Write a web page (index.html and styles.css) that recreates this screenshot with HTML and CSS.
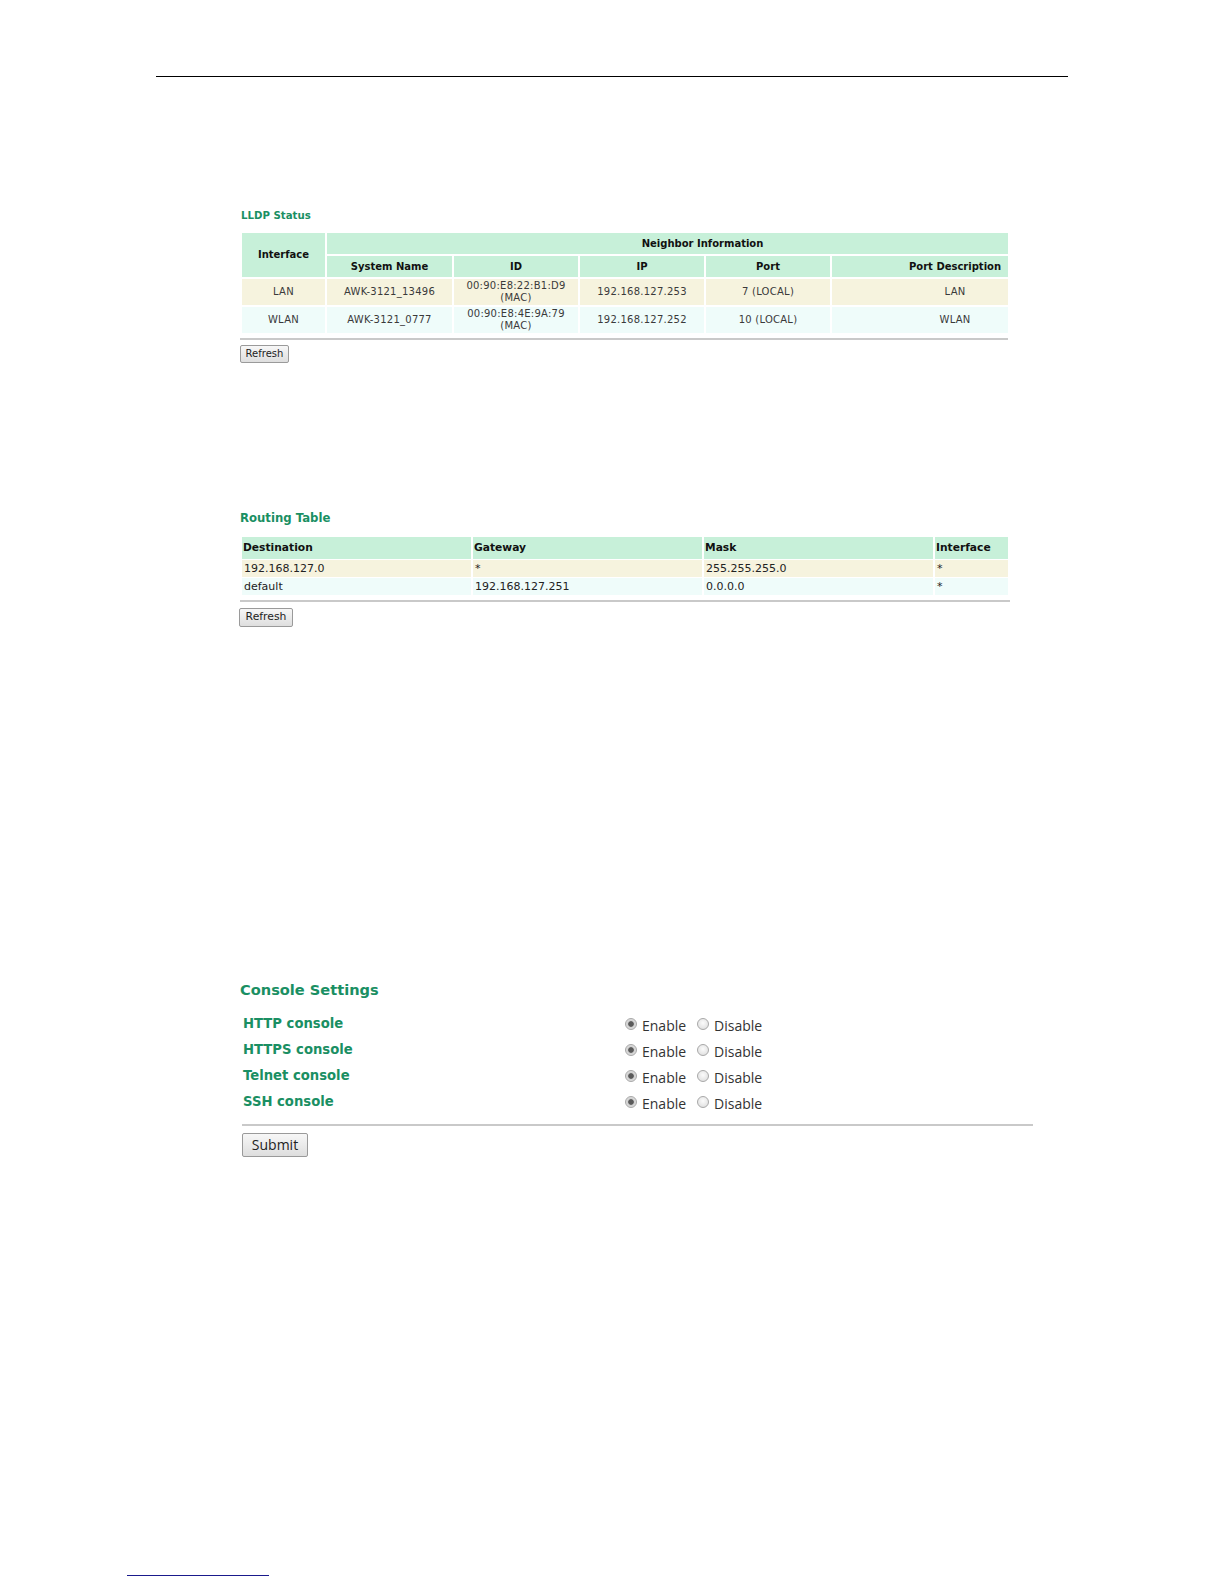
FILE: index.html
```html
<!DOCTYPE html>
<html>
<head>
<meta charset="utf-8">
<title>LLDP / Routing / Console</title>
<link rel="stylesheet" href="styles.css">
</head>
<body>
<div class="page">
  <div class="top-rule"></div>

  <section class="sec lldp">
    <h2 class="title-sm">LLDP Status</h2>
    <table class="grid lldp-table">
      <colgroup>
        <col class="c-if"><col class="c-sn"><col class="c-id"><col class="c-ip"><col class="c-port"><col class="c-desc">
      </colgroup>
      <thead>
        <tr class="hrow">
          <th rowspan="2">Interface</th>
          <th colspan="5" class="pad-desc">Neighbor Information</th>
        </tr>
        <tr class="hrow">
          <th>System Name</th><th>ID</th><th>IP</th><th>Port</th><th class="pad-desc">Port Description</th>
        </tr>
      </thead>
      <tbody>
        <tr class="drow odd">
          <td>LAN</td><td>AWK-3121_13496</td><td class="two">00:90:E8:22:B1:D9<br>(MAC)</td><td>192.168.127.253</td><td>7 (LOCAL)</td><td class="pad-desc">LAN</td>
        </tr>
        <tr class="drow even">
          <td>WLAN</td><td>AWK-3121_0777</td><td class="two">00:90:E8:4E:9A:79<br>(MAC)</td><td>192.168.127.252</td><td>10 (LOCAL)</td><td class="pad-desc">WLAN</td>
        </tr>
      </tbody>
    </table>
    <div class="divider lldp-div"></div>
    <button class="btn btn-lldp" type="button">Refresh</button>
  </section>

  <section class="sec routing">
    <h2 class="title-md">Routing Table</h2>
    <table class="grid route-table">
      <colgroup>
        <col class="r-wide"><col class="r-wide"><col class="r-wide"><col class="r-if">
      </colgroup>
      <thead>
        <tr class="rh"><th>Destination</th><th>Gateway</th><th>Mask</th><th>Interface</th></tr>
      </thead>
      <tbody>
        <tr class="rd odd"><td>192.168.127.0</td><td>*</td><td>255.255.255.0</td><td>*</td></tr>
        <tr class="rd even"><td>default</td><td>192.168.127.251</td><td>0.0.0.0</td><td>*</td></tr>
      </tbody>
    </table>
    <div class="divider route-div"></div>
    <button class="btn btn-route" type="button">Refresh</button>
  </section>

  <section class="sec console">
    <h2 class="title-lg">Console Settings</h2>
    <div class="con-list">
      <div class="con-row">
        <span class="con-label">HTTP console</span>
        <label class="opt"><input type="radio" name="http" checked><span>Enable</span></label>
        <label class="opt"><input type="radio" name="http"><span>Disable</span></label>
      </div>
      <div class="con-row">
        <span class="con-label">HTTPS console</span>
        <label class="opt"><input type="radio" name="https" checked><span>Enable</span></label>
        <label class="opt"><input type="radio" name="https"><span>Disable</span></label>
      </div>
      <div class="con-row">
        <span class="con-label">Telnet console</span>
        <label class="opt"><input type="radio" name="telnet" checked><span>Enable</span></label>
        <label class="opt"><input type="radio" name="telnet"><span>Disable</span></label>
      </div>
      <div class="con-row">
        <span class="con-label">SSH console</span>
        <label class="opt"><input type="radio" name="ssh" checked><span>Enable</span></label>
        <label class="opt"><input type="radio" name="ssh"><span>Disable</span></label>
      </div>
    </div>
    <div class="divider con-div"></div>
    <button class="btn btn-submit" type="button">Submit</button>
  </section>

  <div class="foot-rule"></div>
</div>
</body>
</html>
```

FILE: styles.css
```css
* { box-sizing: border-box; }

html, body {
  margin: 0;
  padding: 0;
  background: #ffffff;
}

.page {
  width: 1224px;
  min-height: 1584px;
  padding-top: 76px;
  overflow: hidden;
}

.top-rule {
  margin-left: 156px;
  width: 912px;
  height: 1px;
  background: #000000;
}

.sec {
  margin-left: 240px;
  width: 800px;
}

/* headings */
.title-sm,
.title-md,
.title-lg {
  margin: 0;
  font-family: "DejaVu Sans", Verdana, sans-serif;
  font-weight: bold;
  color: #1a8f63;
}

.title-sm {
  margin-left: 1px;
  font-size: 10.2px;
  line-height: 14px;
}

.title-md {
  font-size: 11.7px;
  line-height: 16px;
}

.title-lg {
  font-size: 14.6px;
  line-height: 20px;
}

/* tables */
.grid {
  border-collapse: separate;
  border-spacing: 2px;
  table-layout: fixed;
  width: 770px;
}

.grid th,
.grid td {
  padding: 0;
  vertical-align: middle;
}

.lldp { margin-top: 132px; }

.lldp-table { margin-top: 8px; }

.c-if { width: 83px; }
.c-sn { width: 125px; }
.c-id { width: 124px; }
.c-ip { width: 124px; }
.c-port { width: 124px; }
.c-desc { width: 176px; }

.lldp-table th {
  height: 21px;
  background: #c7f0d9;
  color: #111111;
  font: bold 10px/12px "DejaVu Sans", Verdana, sans-serif;
  text-align: center;
}

.lldp-table td {
  height: 26px;
  color: #3a3a3a;
  font: 10px/12px "DejaVu Sans", Verdana, sans-serif;
  letter-spacing: 0.25px;
  text-align: center;
}

.lldp-table th.pad-desc,
.lldp-table td.pad-desc {
  padding-left: 70px;
}

.odd td { background: #f6f3de; }
.even td { background: #effcfa; }

.divider {
  height: 2px;
  background: #c9c9c9;
}

.lldp-div {
  margin-top: 3px;
  width: 768px;
}

.btn {
  display: block;
  padding: 0;
  border: 1px solid #9a9a9a;
  border-radius: 2px;
  background: linear-gradient(#f7f7f7, #dedede);
  color: #222222;
  cursor: pointer;
}

.btn-lldp {
  margin-top: 5px;
  width: 49px;
  height: 18px;
  font: 10px/1 "DejaVu Sans", Verdana, sans-serif;
}

/* routing */
.routing { margin-top: 147px; }

.route-table {
  margin-top: 10px;
  border-spacing: 2px 1px;
}

.r-wide { width: 229px; }
.r-if { width: 73px; }

.route-table th {
  height: 22px;
  padding-left: 1px;
  background: #c7f0d9;
  color: #111111;
  font: bold 10.7px/12px "DejaVu Sans", Verdana, sans-serif;
  text-align: left;
}

.route-table td {
  height: 17px;
  padding-left: 2px;
  color: #222222;
  font: 11px/13px "DejaVu Sans", Verdana, sans-serif;
  text-align: left;
}

.route-div {
  margin-top: 4px;
  width: 770px;
}

.btn-route {
  margin-top: 6px;
  margin-left: -1px;
  width: 54px;
  height: 19px;
  font: 10.8px/1 "DejaVu Sans", Verdana, sans-serif;
}

/* console */
.console { margin-top: 353px; }

.con-list {
  margin-top: 11px;
}

.con-row {
  display: flex;
  align-items: center;
  height: 26px;
  padding-left: 3px;
}

.con-label {
  width: 382px;
  font: bold 13.2px/16px "DejaVu Sans", Verdana, sans-serif;
  color: #1a8f63;
}

.opt {
  display: flex;
  align-items: center;
  font: 14px/18px "Open Sans", "Segoe UI", sans-serif;
  color: #333333;
}

.opt + .opt { margin-left: 11px; }

.opt input {
  -webkit-appearance: none;
  appearance: none;
  margin: 0 5px 0 0;
  width: 12px;
  height: 12px;
  border: 1px solid #a8a8a8;
  border-radius: 50%;
  background: radial-gradient(circle at 50% 40%, #fbfbfb 0, #e4e4e4 70%, #d6d6d6 100%);
}

.opt input:checked {
  background: radial-gradient(circle, #5a5a5a 0, #5a5a5a 2.4px, #cfcfcf 3.2px, #ececec 100%);
}

.opt span { position: relative; top: 2px; }

.con-div {
  margin-top: 9px;
  margin-left: 2px;
  width: 791px;
}

.btn-submit {
  margin-top: 7px;
  margin-left: 2px;
  width: 66px;
  height: 24px;
  font: 14px/1 "Open Sans", "Segoe UI", sans-serif;
}

.foot-rule {
  margin-top: 418px;
  margin-left: 127px;
  width: 142px;
  height: 1px;
  background: #1a1a8c;
}
```
